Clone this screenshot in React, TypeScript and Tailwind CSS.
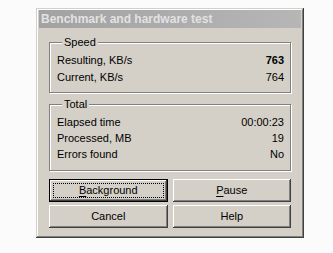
import React from 'react';

const raised =
    'shadow-[inset_-1px_-1px_#404040,inset_1px_1px_#ffffff,inset_-2px_-2px_#808080,inset_2px_2px_#d4d0c8]';

function Row({ label, value, bold, tall }: { label: string; value: string; bold?: boolean; tall?: boolean }) {
    return (
        <div className={`flex items-center justify-between ${tall ? 'h-[17px]' : 'h-[16px]'}`}>
            <span>{label}</span>
            <span className={bold ? 'font-bold' : ''}>{value}</span>
        </div>
    );
}

function Group({ title, children, className }: { title: string; children: React.ReactNode; className?: string }) {
    return (
        <fieldset
            className={`border border-[#808080] shadow-[1px_1px_0_#ffffff,inset_1px_1px_0_#ffffff] pl-[7px] pr-[6px] ${className ?? ''}`}
        >
            <legend className="ml-[5px] bg-[#d4d0c8] px-[2px] leading-[13px]">{title}</legend>
            {children}
        </fieldset>
    );
}

function Button({ hot, text, isDefault }: { hot?: string; text: string; isDefault?: boolean }) {
    return (
        <button
            className={`relative flex h-[23px] items-center justify-center bg-[#d4d0c8] text-black ${
                isDefault ? 'border border-black' : ''
            } ${raised}`}
        >
            {isDefault && (
                <span className="absolute inset-[3px] border border-dotted border-black" />
            )}
            <span className="relative">
                {hot && <span className="underline underline-offset-2">{hot}</span>}
                {text}
            </span>
        </button>
    );
}

export default function App() {
    return (
        <div
            className="min-h-[253px] bg-[#fbfbfb] pl-[36px] pt-[8px] text-[11px] text-black"
            style={{ fontFamily: '"Liberation Sans", Arial, sans-serif' }}
        >
            <div className="flex h-[230px] w-[268px] flex-col bg-[#d4d0c8] px-[3px] pt-[2px] shadow-[inset_-1px_-1px_#404040,inset_1px_1px_#d4d0c8,inset_-2px_-2px_#808080,inset_2px_2px_#ffffff]">
                <div className="flex h-[18px] items-center bg-gradient-to-r from-[#a2a2a2] to-[#b6b6b6] px-[2px] text-[12px] font-bold text-[#e2e2e2]">
                    Benchmark and hardware test
                </div>

                <div className="flex flex-col px-[10px] pt-[8px]">
                    <Group title="Speed" className="pb-[6px] pt-[3px]">
                        <Row label="Resulting, KB/s" value="763" bold tall />
                        <Row label="Current, KB/s" value="764" tall />
                    </Group>

                    <Group title="Total" className="mt-[5px] pb-[8px] pt-[3px]">
                        <Row label="Elapsed time" value="00:00:23" />
                        <Row label="Processed, MB" value="19" />
                        <Row label="Errors found" value="No" />
                    </Group>

                    <div className="mt-[8px] grid grid-cols-2 gap-x-[5px] gap-y-[3px]">
                        <Button hot="B" text="ackground" isDefault />
                        <Button hot="P" text="ause" />
                        <Button text="Cancel" />
                        <Button text="Help" />
                    </div>
                </div>
            </div>
        </div>
    );
}
